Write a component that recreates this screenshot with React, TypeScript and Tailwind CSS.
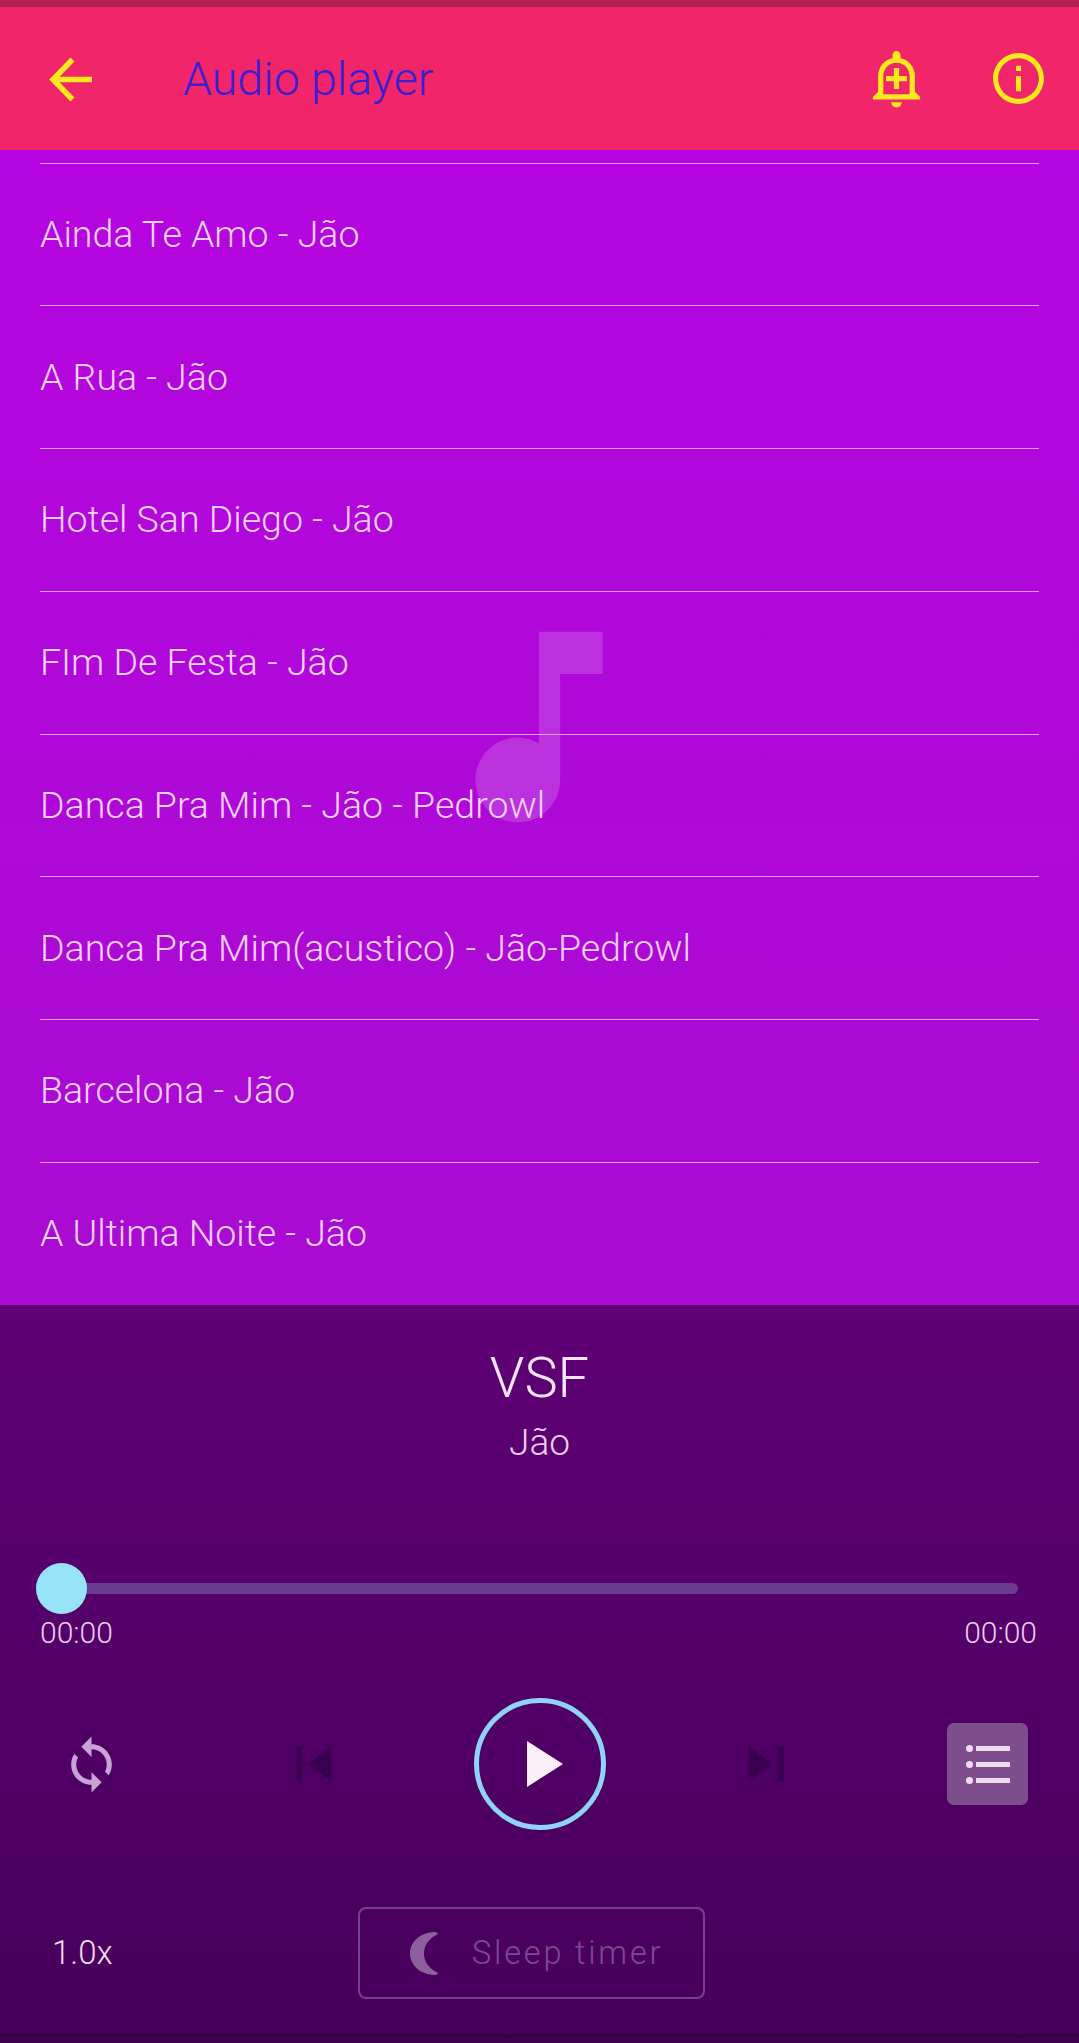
const songs = [
  "Ainda Te Amo - Jão",
  "A Rua - Jão",
  "Hotel San Diego - Jão",
  "FIm De Festa - Jão",
  "Danca Pra Mim - Jão - Pedrowl",
  "Danca Pra Mim(acustico) - Jão-Pedrowl",
  "Barcelona - Jão",
  "A Ultima Noite - Jão",
];

function Header() {
  return (
    <header className="flex h-[143px] shrink-0 items-center bg-[#f0256a]">
      <svg className="ml-[49px] mt-[1px] h-[45px] w-[45px]" viewBox="0 0 45 45" fill="none" stroke="#fbe91e" strokeWidth="5.5" aria-hidden>
        <path d="M43 22.5H5" />
        <path d="M23.5 2.5 4 22.5l19.5 20" />
      </svg>
      <h1 className="ml-[89px] text-[46.5px] font-light leading-[56px] text-[#3c1ed2]">Audio player</h1>
      <div className="ml-auto mr-[30px] flex items-center gap-[60px]">
        <svg className="h-[63px] w-[63px]" viewBox="0 0 24 24" fill="#fbe91e" aria-hidden>
          <path d="M10.01 21.01c0 1.1.89 1.99 1.99 1.99s1.99-.89 1.99-1.99h-3.98zM12 6c2.76 0 5 2.24 5 5v7H7v-7c0-2.76 2.24-5 5-5zm0-4.5c-.83 0-1.5.67-1.5 1.5v1.17C7.36 4.85 5 7.65 5 11v6l-2 2v1h18v-1l-2-2v-6c0-3.35-2.36-6.15-5.5-6.83V3c0-.83-.67-1.5-1.5-1.5zM13 8h-2v3H8v2h3v3h2v-3h3v-2h-3z" />
        </svg>
        <svg className="h-[61px] w-[61px]" viewBox="0 0 24 24" fill="#fbe91e" aria-hidden>
          <path d="M11 7h2v2h-2zm0 4h2v6h-2zm1-9C6.48 2 2 6.48 2 12s4.48 10 10 10 10-4.48 10-10S17.52 2 12 2zm0 18c-4.41 0-8-3.59-8-8s3.59-8 8-8 8 3.59 8 8-3.59 8-8 8z" />
        </svg>
      </div>
    </header>
  );
}

function SongList() {
  return (
    <section className="relative h-[1155px] shrink-0 overflow-hidden bg-gradient-to-b from-[#b505e0] to-[#a90bd1] pt-[12.5px]">
      {/* faded note behind the rows */}
      <svg className="absolute left-[412px] top-[450px] h-[254px] w-[254px]" viewBox="0 0 24 24" fill="#ffffff" fillOpacity="0.17" aria-hidden>
        <path d="M12 3v10.55c-.59-.34-1.27-.55-2-.55-2.21 0-4 1.79-4 4s1.79 4 4 4 4-1.79 4-4V7h4V3h-6z" />
      </svg>
      <ul className="relative mx-[40px]">
        {songs.map((song) => (
          <li
            key={song}
            className="flex h-[142.75px] items-center border-t-[1.5px] border-[#e29af0] pb-[1px] text-[37.5px] font-light leading-[44px] text-[#f6d2fa]"
          >
            {song}
          </li>
        ))}
      </ul>
    </section>
  );
}

function Controls() {
  return (
    <div className="mt-[49px] flex items-center pl-[51px]">
      <button type="button" className="flex h-[81px] w-[81px] items-center justify-center">
        <svg className="h-[61px] w-[61px]" viewBox="0 0 24 24" fill="#c9a2d6" aria-hidden>
          <path d="M12 4V1L8 5l4 4V6c3.31 0 6 2.69 6 6 0 1.01-.25 1.97-.7 2.8l1.46 1.46C19.54 15.03 20 13.57 20 12c0-4.42-3.58-8-8-8zm0 14c-3.31 0-6-2.69-6-6 0-1.01.25-1.97.7-2.8L5.24 7.74C4.46 8.97 4 10.43 4 12c0 4.42 3.58 8 8 8v3l4-4-4-4v3z" />
        </svg>
      </button>
      <button type="button" className="ml-[147px] flex h-[70px] w-[70px] items-center justify-center">
        <svg className="h-[70px] w-[70px]" viewBox="0 0 24 24" fill="#39004f" aria-hidden>
          <path d="M6 6h2v12H6zm3.5 6l8.5 6V6z" />
        </svg>
      </button>
      <button
        type="button"
        className="ml-[125px] flex h-[132px] w-[132px] items-center justify-center rounded-full border-[5px] border-[#8fd4f8]"
      >
        <svg className="ml-[9px] h-[46px] w-[36px]" viewBox="0 0 36 46" fill="#f9eff6" aria-hidden>
          <path d="M0 0l36 23L0 46z" />
        </svg>
      </button>
      <button type="button" className="ml-[125px] flex h-[70px] w-[70px] items-center justify-center">
        <svg className="h-[70px] w-[70px]" viewBox="0 0 24 24" fill="#39004f" aria-hidden>
          <path d="M6 18l8.5-6L6 6v12zM16 6v12h2V6h-2z" />
        </svg>
      </button>
      <button
        type="button"
        className="ml-[146px] flex h-[82px] w-[81px] flex-col items-center justify-center gap-[9px] rounded-[7px] bg-[#7d4e8c]"
      >
        {[0, 1, 2].map((i) => (
          <span key={i} className="flex items-center gap-[3px]">
            <span className="h-[7px] w-[7px] rounded-full bg-[#eddcf0]" />
            <span className="h-[5px] w-[34px] bg-[#eddcf0]" />
          </span>
        ))}
      </button>
    </div>
  );
}

function Player() {
  return (
    <section className="flex min-h-0 flex-1 flex-col bg-gradient-to-b from-[#5e0076] to-[#47005a] pt-[45px] font-light text-[#f8e4fa]">
      <h2 className="text-center text-[56px] font-light leading-[56px]">VSF</h2>
      <p className="mt-[17px] text-center text-[37px] leading-[40px] text-[#eccdf1]">Jão</p>

      <div className="relative mx-[36px] mt-[100px] flex h-[51px] items-center">
        <div className="ml-[24px] mr-[25px] h-[11px] flex-1 rounded-full bg-[#6b3b8f]" />
        <span className="absolute left-0 top-0 h-[51px] w-[51px] rounded-full bg-[#96e3f8]" />
      </div>
      <div className="ml-[40px] mr-[42px] mt-[3px] flex justify-between text-[30px] leading-[32px] text-[#eccdf1]">
        <span>00:00</span>
        <span>00:00</span>
      </div>

      <Controls />

      <div className="mt-[77px] flex items-center pl-[52px]">
        <span className="w-[306px] text-[33px] leading-[36px] text-[#f3daf4]">1.0x</span>
        <button
          type="button"
          className="flex h-[92px] w-[347px] items-center rounded-[8px] border-2 border-[#74418a] pl-[50px]"
        >
          <svg className="h-[43px] w-[28px]" viewBox="0 0 28 43" fill="#8e5f9f" aria-hidden>
            <path d="M26 0C10 0 0 10 0 21.5S10 43 26 43l2-2C18 36 14 29 14 21.5S18 7 28 2z" />
          </svg>
          <span className="ml-[34px] text-[32.5px] font-light leading-[36px] tracking-[2.8px] text-[#7c4a92]">Sleep timer</span>
        </button>
      </div>

      <div className="mt-auto h-[9px] border-t-2 border-[#2f0040] bg-[#3c004e]" />
    </section>
  );
}

export default function App() {
  return (
    <div className="flex h-[2043px] w-full flex-col overflow-hidden font-['Roboto',sans-serif]">
      <div className="h-[7px] shrink-0 bg-[#b51f52]" />
      <Header />
      <SongList />
      <Player />
    </div>
  );
}
